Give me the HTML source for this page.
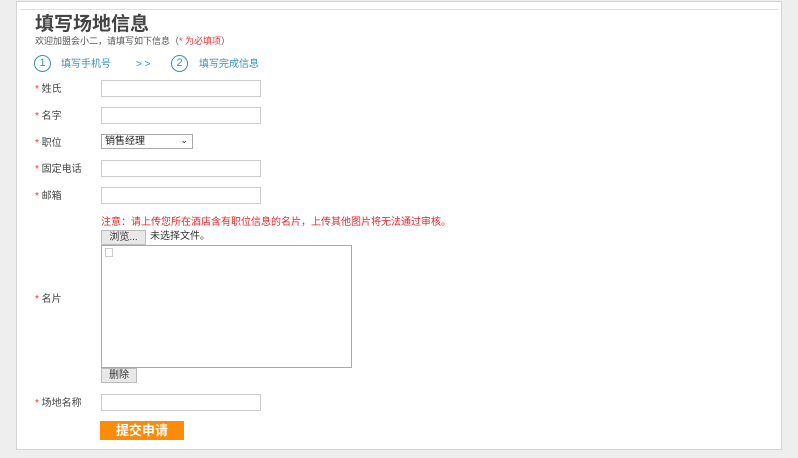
<!DOCTYPE html>
<html><head><meta charset="utf-8"><style>
*{margin:0;padding:0;box-sizing:border-box}
body{width:798px;height:458px;background:#eeeeee;position:relative;overflow:hidden;font-family:"Liberation Sans","Noto Sans CJK SC",sans-serif;color:#333;font-size:10px;line-height:1.2}
.panel{position:absolute;left:16px;top:1px;width:766px;height:449px;background:#fff;border:1px solid #d4d4d4}
.ln{position:absolute;left:20px;top:9px;width:758px;height:1px;background:#e0e0e0}
.a{position:absolute;white-space:nowrap}
.st{color:#e33}
.in{position:absolute;left:101px;width:160px;height:17px;border:1px solid #ccc;background:#fff}
.lb{position:absolute;left:35px;font-size:10px;color:#444}
.c{position:absolute;width:17px;height:17px;border:1px solid #3a8fc0;border-radius:50%;color:#3a8fc0;font-size:11px;text-align:center;line-height:15px}
.bl{color:#3a8fc0;font-size:10px}
.btn{position:absolute;background:#e8e8e8;border:1px solid #bbb;font-size:10px;text-align:center}
</style></head><body>
<div class="panel"></div><div class="ln"></div>
<div class="a" style="left:35px;top:14px;font-size:19px;font-weight:bold;color:#444">填写场地信息</div>
<div class="a" style="left:35px;top:36px;font-size:9px;color:#555">欢迎加盟会小二，请填写如下信息（<span class="st">* 为必填项</span>）</div>
<div class="c" style="left:34px;top:55px">1</div>
<div class="a bl" style="left:61px;top:59px">填写手机号</div>
<div class="a bl" style="left:136px;top:59px">&gt; &gt;</div>
<div class="c" style="left:171px;top:55px">2</div>
<div class="a bl" style="left:199px;top:59px">填写完成信息</div>
<div class="lb" style="top:84px"><span class="st">*</span> 姓氏</div><div class="in" style="top:80px"></div>
<div class="lb" style="top:111px"><span class="st">*</span> 名字</div><div class="in" style="top:107px"></div>
<div class="lb" style="top:138px"><span class="st">*</span> 职位</div>
<div class="a" style="left:101px;top:134px;width:92px;height:15px;border:1px solid #aaa;font-size:10px;padding:1px 3px;color:#222">销售经理<span style="position:absolute;right:4px;top:0;font-size:9px">⌄</span></div>
<div class="lb" style="top:164px"><span class="st">*</span> 固定电话</div><div class="in" style="top:160px"></div>
<div class="lb" style="top:191px"><span class="st">*</span> 邮箱</div><div class="in" style="top:187px"></div>
<div class="a" style="left:101px;top:217px;color:#e0282e;font-size:10px">注意：请上传您所在酒店含有职位信息的名片，上传其他图片将无法通过审核。</div>
<div class="btn" style="left:101px;top:230px;width:45px;height:15px;line-height:13px">浏览...</div>
<div class="a" style="left:150px;top:231px;font-size:10px">未选择文件。</div>
<div class="a" style="left:101px;top:245px;width:251px;height:123px;border:1px solid #aaa"></div>
<div class="a" style="left:105px;top:248px;width:8px;height:9px;border:1px solid #ccc"></div>
<div class="lb" style="top:294px"><span class="st">*</span> 名片</div>
<div class="btn" style="left:101px;top:368px;width:36px;height:15px;line-height:13px">删除</div>
<div class="lb" style="top:398px"><span class="st">*</span> 场地名称</div><div class="in" style="top:394px"></div>
<div class="a" style="left:100px;top:421px;width:84px;height:19px;background:#fb8c0a;color:#fff;font-size:13px;font-weight:bold;text-align:center;line-height:19px">提交申请</div>
</body></html>
